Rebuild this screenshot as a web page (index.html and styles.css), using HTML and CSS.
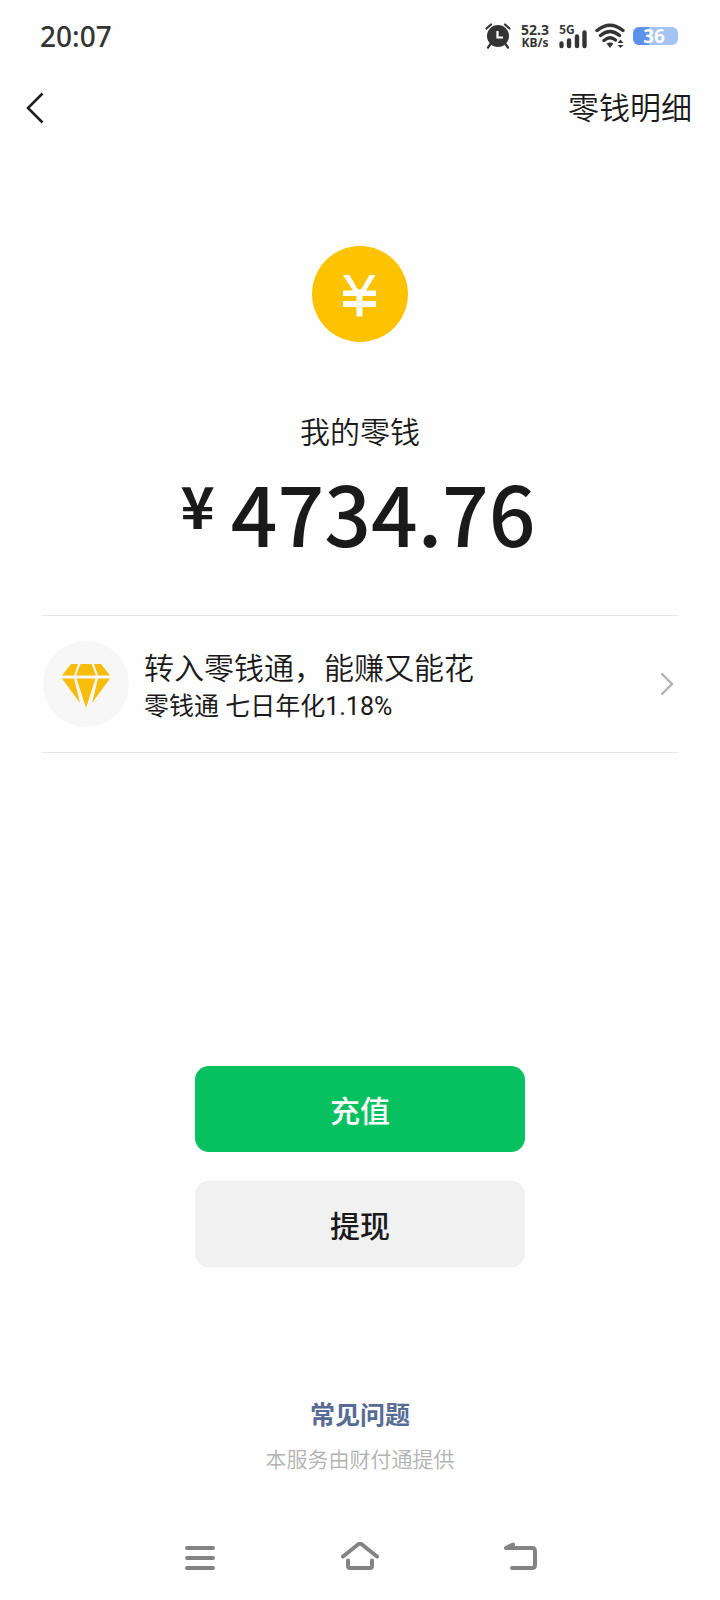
FILE: index.html
```html
<!DOCTYPE html>
<html lang="zh-CN">
<head>
<meta charset="utf-8">
<meta name="viewport" content="width=device-width, initial-scale=1">
<title>零钱</title>
<link rel="stylesheet" href="styles.css">
</head>
<body>
<div class="screen">
  <div class="status-bar">
    <time class="clock">20:07</time>
    <div class="status-icons">
      <svg class="alarm" width="26" height="26" viewBox="0 0 26 26" aria-hidden="true">
        <path d="M1.500 5.500 6 1.500M20 1.500 24.500 5.500M5.500 21 3 24.500M20.500 21 23 24.500" fill="none" stroke="#343434" stroke-width="2.200" stroke-linecap="round"/>
        <circle cx="13" cy="13" r="11" fill="#343434"/>
        <path d="M12.500 8v6.500H18" fill="none" stroke="#fff" stroke-width="2.200"/>
      </svg>
      <div class="speed"><span>52.3</span><span class="unit">KB/s</span></div>
      <div class="signal">
        <span class="signal-type">5G</span>
        <svg width="28" height="26" viewBox="0 0 28 26" aria-hidden="true">
          <path d="M2.500 20.500v2.500M10 17.500v5.500M18 13.500v9.500M25.500 9.500v13.500" fill="none" stroke="#343434" stroke-width="4.400" stroke-linecap="round"/>
        </svg>
      </div>
      <svg class="wifi" width="30" height="26" viewBox="0 0 30 26" aria-hidden="true">
        <path d="M2 7.500Q15-3 28 7.500M5.500 12.500Q15 4.500 24.500 12.500M9 17.500Q15 12.500 20.500 17" fill="none" stroke="#343434" stroke-width="3.400" stroke-linecap="round"/>
        <path d="M11.500 20.500Q15 18.500 18.500 20.500L15 25ZM22.500 20 25.500 16.500 28.500 20ZM22.500 22H28.500L25.500 25Z" fill="#343434"/>
      </svg>
      <div class="battery">36</div>
    </div>
  </div>

  <header class="top-bar">
    <button class="back" type="button" aria-label="返回">
      <svg width="18" height="32" viewBox="0 0 18 32" aria-hidden="true"><path d="M16.500 1.500 2 16l14.500 14.500" fill="none" stroke="#202020" stroke-width="2.600"/></svg>
    </button>
    <a class="detail-link" href="#detail">零钱明细</a>
  </header>

  <main class="wallet">
    <svg class="coin" width="96" height="96" viewBox="0 0 96 96" aria-hidden="true">
      <circle cx="48" cy="48" r="48" fill="#fdc300"/>
      <path d="M31 29 41 44.500H31v5.500H44.500V55H31v6H44.500V70.500h6V61H64V55H50.500V50H64v-5.500H54L63.500 29H57.500L50 42Q47.500 45.500 45 42L37.500 29Z" fill="#fff"/>
    </svg>
    <h1 class="label">我的零钱</h1>
    <p class="amount"><span class="currency">¥</span><span class="value">4734.76</span></p>

    <a class="promo" href="#lqt">
      <span class="promo-icon">
        <svg width="50" height="44" viewBox="0 0 50 44" aria-hidden="true">
          <path d="M10 0H17L13 11.500H1ZM19.500 0H30.500L35 11.500H15ZM33 0H40L49 11.500H37ZM1 14.500H13L19 39ZM15.500 14.500H34.500L25 44ZM37 14.500H49L31 39Z" fill="#f8bd0b"/>
        </svg>
      </span>
      <span class="promo-text">
        <span class="promo-title">转入零钱通，能赚又能花</span>
        <span class="promo-sub">零钱通 七日年化1.18%</span>
      </span>
      <svg class="chevron" width="14" height="24" viewBox="0 0 14 24" aria-hidden="true"><path d="M1.500 1.500 12 12 1.500 22.500" fill="none" stroke="#b2b2b2" stroke-width="2.400"/></svg>
    </a>

    <div class="actions">
      <button class="btn btn-primary" type="button">充值</button>
      <button class="btn btn-plain" type="button">提现</button>
    </div>
  </main>

  <footer class="footer">
    <a class="faq" href="#faq">常见问题</a>
    <p class="provider">本服务由财付通提供</p>
  </footer>

  <nav class="system-nav" aria-label="系统导航">
    <button type="button" aria-label="最近任务">
      <svg width="40" height="32" viewBox="0 0 40 32" aria-hidden="true"><path d="M7 6H33M7 16H33M7 26H33"/></svg>
    </button>
    <button type="button" aria-label="主屏幕">
      <svg width="40" height="32" viewBox="0 0 40 32" aria-hidden="true"><path d="M3 14.500 18 2.500Q20 1 22 2.500L37 14.500M8 18.500V24Q8 26 10 26H30Q32 26 32 24V18.500"/></svg>
    </button>
    <button type="button" aria-label="返回上一级">
      <svg width="40" height="32" viewBox="0 0 40 32" aria-hidden="true"><path d="M13 2.500 6 6H32Q35 6 35 9V23Q35 26 32 26H12"/></svg>
    </button>
  </nav>
</div>
</body>
</html>
```
FILE: styles.css
```css
* {
  box-sizing: border-box;
}

body {
  margin: 0;
  background: #fefefe;
  color: #1a1a1a;
  font-family: "Noto Sans CJK SC", "Noto Sans", sans-serif;
  font-weight: 350;
}

h1,
p {
  margin: 0;
  font-weight: inherit;
}

a {
  color: inherit;
  text-decoration: none;
}

button {
  padding: 0;
  border: 0;
  background: none;
  color: inherit;
  font: inherit;
}

svg {
  display: block;
}

.screen {
  display: flex;
  flex-direction: column;
  min-height: 100vh;
}

.status-bar {
  display: flex;
  align-items: center;
  justify-content: space-between;
  height: 72px;
  padding: 0 42px 0 40px;
  color: #343434;
}

.clock {
  font-family: "Noto Sans", sans-serif;
  font-size: 28px;
  font-weight: 500;
}

.status-icons {
  display: flex;
  align-items: center;
  gap: 8px;
}

.speed {
  display: flex;
  flex-direction: column;
  width: 32px;
  font-family: "Noto Sans", sans-serif;
  font-size: 14px;
  font-weight: 700;
  line-height: 14px;
  text-align: center;
}

.unit {
  font-size: 12px;
  line-height: 12px;
}

.signal {
  position: relative;
}

.signal-type {
  position: absolute;
  top: 0;
  left: 0;
  font-size: 12px;
  font-weight: 700;
  line-height: 12px;
}

.battery {
  width: 45px;
  height: 18px;
  padding-right: 3px;
  border-radius: 6px;
  background: linear-gradient(90deg, #5b92ea 36%, #a4c2f3 36%);
  color: #fff;
  font-family: "Noto Sans", sans-serif;
  font-size: 19px;
  font-weight: 700;
  line-height: 18px;
  text-align: center;
}

.top-bar {
  display: flex;
  align-items: center;
  justify-content: space-between;
  height: 72px;
  padding: 0 28px 0 26px;
}

.detail-link {
  padding-bottom: 4px;
  font-size: 31px;
  line-height: 40px;
}

.wallet {
  display: flex;
  flex-direction: column;
  align-items: center;
  padding: 102px 43px 0;
}

.label {
  margin-top: 68px;
  font-size: 30px;
  line-height: 40px;
}

.amount {
  display: flex;
  align-items: flex-start;
  gap: 16px;
  margin-top: 20px;
  padding-right: 4px;
  font-weight: 500;
}

.currency {
  font-size: 58px;
  font-weight: 700;
  line-height: 68px;
}

.value {
  font-size: 82px;
  line-height: 84px;
}

.promo {
  display: flex;
  align-items: center;
  align-self: stretch;
  gap: 15px;
  margin-top: 61px;
  padding: 25px 3px 25px 0;
  border: solid #e5e5e5;
  border-width: 1px 0;
}

.promo-icon {
  display: grid;
  place-items: center;
  width: 86px;
  height: 86px;
  padding-top: 3px;
  border-radius: 50%;
  background: #f7f7f7;
}

.promo-text {
  display: flex;
  flex: 1;
  flex-direction: column;
  padding-top: 4px;
}

.promo-title {
  font-size: 30px;
  line-height: 42px;
}

.promo-sub {
  font-family: Roboto, "Noto Sans CJK SC", sans-serif;
  font-size: 25px;
  font-weight: 400;
  line-height: 40px;
}

.actions {
  display: flex;
  flex-direction: column;
  gap: 29px;
  width: 52%;
  margin-top: 313px;
}

.btn {
  height: 86px;
  border-radius: 14px;
  font-size: 30px;
  font-weight: 500;
}

.btn-primary {
  background: #07c160;
  color: #fff;
}

.btn-plain {
  background: #f1f1f1;
}

.footer {
  display: flex;
  flex-direction: column;
  align-items: center;
  gap: 12px;
  margin-top: auto;
  padding: 40px 0 69px;
}

.faq {
  color: #576b95;
  font-size: 25px;
  font-weight: 700;
  line-height: 36px;
}

.provider {
  color: #b2b2b2;
  font-size: 21px;
  line-height: 30px;
}

.system-nav {
  display: flex;
  justify-content: center;
  gap: 120px;
  padding: 0 0 26px;
}

.system-nav path {
  fill: none;
  stroke: #838383;
  stroke-width: 4;
  stroke-linecap: round;
  stroke-linejoin: round;
}
```
